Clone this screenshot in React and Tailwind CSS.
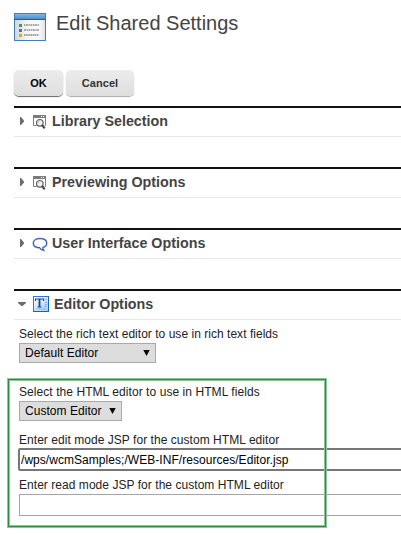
function PageIcon() {
  return (
    <svg width="32" height="28" viewBox="0 0 32 28" className="block shrink-0">
      <defs>
        <linearGradient id="bar" x1="0" y1="0" x2="0" y2="1">
          <stop offset="0" stopColor="#7db9e6" />
          <stop offset="1" stopColor="#4a8fce" />
        </linearGradient>
        <linearGradient id="sheet" x1="0" y1="0" x2="1" y2="0">
          <stop offset="0" stopColor="#d6d6d6" />
          <stop offset="0.4" stopColor="#f6f6f6" />
          <stop offset="0.8" stopColor="#fafafa" />
          <stop offset="1" stopColor="#e2e2e2" />
        </linearGradient>
      </defs>
      <rect width="32" height="28" fill="#3f80bb" />
      <rect x="1" y="1" width="30" height="5" fill="url(#bar)" />
      <rect x="0" y="6" width="32" height="1" fill="#235f99" />
      <rect x="1" y="7" width="30" height="20" fill="url(#sheet)" />
      <rect x="5" y="11" width="3" height="3" fill="#35a546" />
      <rect x="5" y="16" width="3" height="3" fill="#4179b5" />
      <rect x="5" y="21" width="3" height="3" fill="#f79a1c" />
      <g fill="none" stroke="#a8a8a8" strokeWidth="2">
        <path d="M10 12h15" strokeDasharray="1.4 .5 2 .6" />
        <path d="M10 17h15" strokeDasharray="2 .6 1.3 .5" />
        <path d="M10 22h15" strokeDasharray="1.7 .4" />
      </g>
    </svg>
  );
}

function SearchWindowIcon() {
  return (
    <svg width="13" height="14" viewBox="0 0 13 14" className="mt-px block">
      <path d="M0 0h13v3H0z" fill="#7c7c7c" />
      <path d="M8 1h1v1H8zM10 1h1v1h-1z" fill="#fff" />
      <path d="M.5 2v8.500h3M12.500 2v8.500h-1" fill="none" stroke="#808080" />
      <circle cx="6.800" cy="7.800" r="3.300" fill="#f0f0f0" stroke="#606060" strokeWidth="1.200" />
      <path d="M5 7.500q.3-1.400 1.700-1.600" fill="none" stroke="#aaa" strokeWidth=".8" />
      <path d="M9 10l2.700 3.300" stroke="#444" strokeWidth="2.100" />
    </svg>
  );
}

function BubbleIcon() {
  return (
    <svg width="16" height="16" viewBox="0 0 16 16" className="-ml-px mt-px block">
      <path
        d="M8 1.700C4 1.700 1.400 3.500 1.400 6.200s2.300 4.300 6.300 4.500c.9 1.500 2.200 2.300 3.800 2.500-.6-.9-.8-1.900-.6-2.900 2.300-.7 3.700-2.100 3.700-4.100 0-2.700-2.600-4.500-6.600-4.500z"
        fill="#f8faff"
        stroke="#c5d4ec"
        strokeWidth="2.600"
      />
      <path
        d="M8 1.700C4 1.700 1.400 3.500 1.400 6.200s2.300 4.300 6.300 4.500c.9 1.500 2.200 2.300 3.800 2.500-.6-.9-.8-1.900-.6-2.900 2.300-.7 3.700-2.100 3.700-4.100 0-2.700-2.600-4.500-6.600-4.500z"
        fill="#fff"
        stroke="#3c5fa5"
        strokeWidth="1.200"
      />
    </svg>
  );
}

function TextEditorIcon() {
  return (
    <svg width="16" height="16" viewBox="0 0 16 16" className="block">
      <defs>
        <linearGradient id="ed" x1="0" y1="0" x2="1" y2="1">
          <stop offset="0" stopColor="#fff" />
          <stop offset="1" stopColor="#9ccdf5" />
        </linearGradient>
      </defs>
      <rect x=".5" y=".5" width="15" height="15" fill="url(#ed)" stroke="#2c7ccd" />
      <path d="M15.500 0v15.500H0" fill="none" stroke="#1563bd" />
      <path d="M2.500 5V3h8v2M4.500 11h4" fill="none" stroke="#1f3f9c" strokeWidth="1.100" />
      <path d="M6.500 3v8" stroke="#1f3f9c" strokeWidth="1.800" />
      <path d="M12 3.500h2M12 6.500h2M12 8.500h2M11 10.500h3M2.500 13h11" stroke="#78b2e6" strokeDasharray="2 .5" />
    </svg>
  );
}

function Section({ title, icon, open = false }) {
  return (
    <section className="h-[61px]">
      <div className="flex h-[31px] border-b border-t-2 border-b-[#e8e8e8] border-t-[#111]">
        <div className="flex w-[19px] shrink-0 pt-[9px]">
          {open ? (
            <svg width="8" height="4" className="ml-1 mt-[2px] block">
              <path d="M0 0h8v1L4.500 4h-1L0 1z" fill="#6b6b6b" />
            </svg>
          ) : (
            <svg width="4" height="8" className="ml-1.5 block">
              <path d="M0 0h1l3 3.500v1L1 8H0z" fill="#6b6b6b" />
            </svg>
          )}
        </div>
        <div className={open ? "w-[21px] shrink-0 pt-[5px]" : "w-[19px] shrink-0 pt-1.5"}>{icon}</div>
        <h2 className="whitespace-nowrap pt-[3px] text-[14.300px] font-bold leading-5 text-[#444]">{title}</h2>
      </div>
    </section>
  );
}

function Select({ value, className }) {
  return (
    <button
      className={`flex h-5 items-center justify-between border border-[#a9a9a9] bg-[#ddd] pl-[5px] pr-[5px] text-[12px] leading-[18px] text-black ${className}`}
    >
      <span>{value}</span>
      <svg width="7" height="6" className="block">
        <path d="M0.300 0h6.400L3.500 6z" />
      </svg>
    </button>
  );
}

export default function App() {
  return (
    <main className="relative h-[534px] w-[401px] overflow-hidden bg-white font-['Liberation_Sans',Arial,sans-serif] text-[#222]">
      <header className="flex h-[70px] gap-[10px] pl-[14px] pt-[13px]">
        <PageIcon />
        <h1 className="-mt-[2px] whitespace-nowrap text-[20px] leading-6 text-[#444]">Edit Shared Settings</h1>
      </header>
      <div className="flex h-9 items-start gap-[3px] pl-[14px] text-[11px] font-bold">
        <button className="h-[26px] w-[49px] rounded-[5px] bg-linear-to-b from-[#ececec] to-[#dedede] text-black shadow-[0_1px_1px_#666]">
          OK
        </button>
        <button className="h-[26px] w-[68px] rounded-[5px] bg-linear-to-b from-[#ececec] to-[#dedede] tracking-[0.06px] text-[#333] shadow-[0_1px_1px_#aaa]">
          Cancel
        </button>
      </div>
      <div className="ml-[14px]">
        <Section title="Library Selection" icon={<SearchWindowIcon />} />
        <Section title="Previewing Options" icon={<SearchWindowIcon />} />
        <Section title="User Interface Options" icon={<BubbleIcon />} />
      </div>
      <div className="ml-[14px] h-[37px]">
        <Section title="Editor Options" icon={<TextEditorIcon />} open />
      </div>
      <div className="ml-[19px] flex flex-col items-start whitespace-nowrap text-[12px] leading-4 tracking-[0.045px]">
        <label className="h-[17px] tracking-[0.030px]">Select the rich text editor to use in rich text fields</label>
        <Select value="Default Editor" className="w-[137px]" />
        <label className="mt-[21px] h-[17px] tracking-[0.065px]">Select the HTML editor to use in HTML fields</label>
        <Select value="Custom Editor" className="w-[103px]" />
        <label className="mt-[11px] h-4">Enter edit mode JSP for the custom HTML editor</label>
        <input
          className="-ml-px block h-[23px] w-[400px] rounded-[2px] border-2 border-[#777] bg-white pl-px text-[12px] tracking-[0.045px] text-black outline-none"
          defaultValue="/wps/wcmSamples;/WEB-INF/resources/Editor.jsp"
        />
        <label className="mt-[6px] h-[17px]">Enter read mode JSP for the custom HTML editor</label>
        <input className="block h-[22px] w-[400px] border border-[#a5a5a5] bg-white outline-none" />
      </div>
      <div className="pointer-events-none absolute left-[7px] top-[378px] h-[150px] w-[320px] border border-[#8cc799]">
        <div className="h-full border border-[#2a8d40]">
          <div className="h-full border border-[#8cc799]" />
        </div>
      </div>
    </main>
  );
}
